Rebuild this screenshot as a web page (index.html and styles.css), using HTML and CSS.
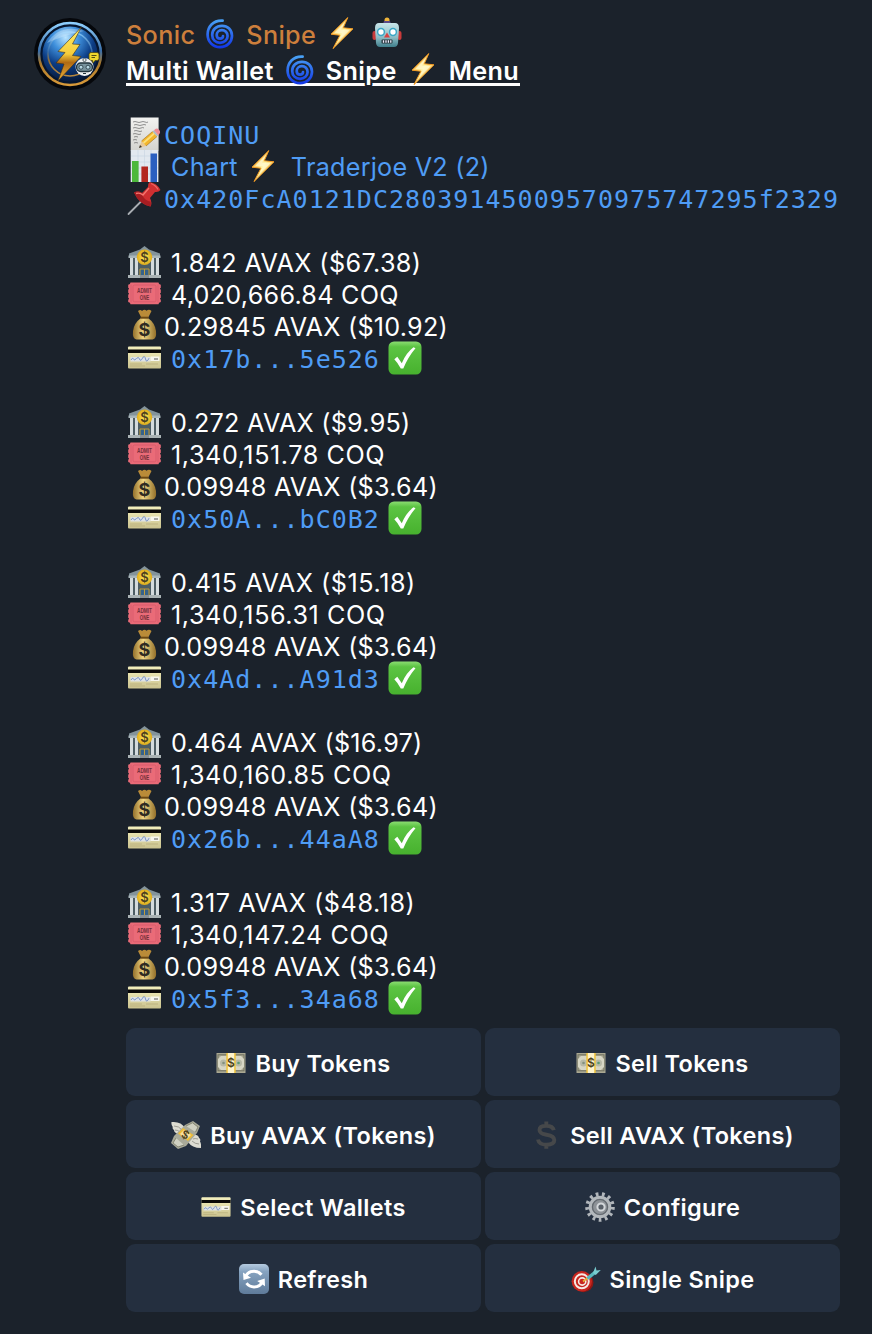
FILE: index.html
```html
<!DOCTYPE html>
<html lang="en">
<head>
<meta charset="utf-8">
<title>Sonic Snipe</title>
<link rel="stylesheet" href="styles.css">
</head>
<body>
<svg class="defs" aria-hidden="true">
  <defs>
    <linearGradient id="gSwirl" x1="0" y1="0" x2="0" y2="1"><stop offset="0" stop-color="#48a0f4"/><stop offset="1" stop-color="#1238e8"/></linearGradient>
    <linearGradient id="gBolt" x1="0" y1="0" x2="1" y2="1"><stop offset="0" stop-color="#f59a1c"/><stop offset=".5" stop-color="#fff3a0"/><stop offset="1" stop-color="#f08a14"/></linearGradient>
    <linearGradient id="gBot" x1="0" y1="0" x2="0" y2="1"><stop offset="0" stop-color="#c8e6ea"/><stop offset=".6" stop-color="#8dbcc4"/><stop offset="1" stop-color="#3f7f8c"/></linearGradient>
    <linearGradient id="gPaper" x1="0" y1="0" x2="0" y2="1"><stop offset="0" stop-color="#f2f2f0"/><stop offset="1" stop-color="#d4d4d0"/></linearGradient>
    <linearGradient id="gCard" x1="0" y1="0" x2="0" y2="1"><stop offset="0" stop-color="#f3efbd"/><stop offset="1" stop-color="#cbc38f"/></linearGradient>
    <linearGradient id="gCheck" x1="0" y1="0" x2="0" y2="1"><stop offset="0" stop-color="#8bdc72"/><stop offset=".16" stop-color="#5cc443"/><stop offset="1" stop-color="#47b12e"/></linearGradient>
    <linearGradient id="gBag" x1="0" y1="0" x2="1" y2="0"><stop offset="0" stop-color="#94702a"/><stop offset=".45" stop-color="#f0d684"/><stop offset="1" stop-color="#94702a"/></linearGradient>
    <linearGradient id="gRef" x1="0" y1="0" x2="0" y2="1"><stop offset="0" stop-color="#b5cbe0"/><stop offset=".25" stop-color="#86a3c0"/><stop offset="1" stop-color="#5f7b9a"/></linearGradient>
    <radialGradient id="gCoin"><stop offset="0" stop-color="#ffe95a"/><stop offset="1" stop-color="#e0ac1c"/></radialGradient>
    <radialGradient id="gOrb" cx=".42" cy=".2" r=".85"><stop offset="0" stop-color="#b9e4ff"/><stop offset=".28" stop-color="#3f90dc"/><stop offset=".6" stop-color="#0c3c84"/><stop offset="1" stop-color="#061430"/></radialGradient>
    <linearGradient id="gRing" x1="0" y1="0" x2="0" y2="1"><stop offset="0" stop-color="#8ed0ff"/><stop offset=".45" stop-color="#3a6ea8"/><stop offset=".65" stop-color="#a9782a"/><stop offset="1" stop-color="#d99a3a"/></linearGradient>
    <linearGradient id="gGold" x1="0" y1="0" x2="0" y2="1"><stop offset="0" stop-color="#fff06a"/><stop offset=".5" stop-color="#f5cc3c"/><stop offset=".66" stop-color="#b06a14"/><stop offset="1" stop-color="#f0b43a"/></linearGradient>
  </defs>
</svg>
<svg class="symbols" aria-hidden="true">
  <symbol id="swirl" viewBox="0 0 28 30">
    <path d="M16.600 1.600C7 1 1.600 8 1.600 15.500C1.600 23 7 28.200 14 28.200C21 28.200 26 23 26 16.800C26 10.800 21.600 6.800 16 6.800C10 6.800 6.200 11 6.200 16C6.200 20.600 9.600 23.800 14 23.800C18.400 23.800 21.600 20.800 21.600 17C21.600 13.600 19 11.200 15.900 11.200C12.800 11.200 10.700 13.400 10.700 16C10.700 18.200 12.200 19.600 14 19.600C15.800 19.600 17 18.500 17 17" fill="none" stroke="url(#gSwirl)" stroke-width="2.700" stroke-linecap="round"/>
  </symbol>
  <symbol id="bolt" viewBox="0 0 24 32">
    <path d="M17.800.6 1 17.200 10 18.200 3 31.600 23 11.800 13.200 10.800Z" fill="url(#gBolt)" stroke="#f29a22" stroke-width="1"/>
    <path d="M15 5 4.500 15.800 12 16.600 8 24 19.500 13.200 11.200 12.500Z" fill="#fffbd8" opacity=".7"/>
  </symbol>
  <symbol id="robot" viewBox="0 0 30 31">
    <path d="M12.500 6V3a2.500 2.500 0 0 1 5 0v3z" fill="#f0b53a"/><path d="M12 4h6l1 3h-8z" fill="#5b4a86"/>
    <rect x=".5" y="14" width="4" height="9" rx="2" fill="#c93a3a"/><rect x="25.500" y="14" width="4" height="9" rx="2" fill="#c93a3a"/>
    <path d="M7 6h16q4 0 4 5l-1 15q-.5 4-4 4H8q-3.500 0-4-4L3 11q0-5 4-5z" fill="url(#gBot)"/>
    <circle cx="9" cy="15" r="3.400" fill="#fff" stroke="#3aa7c6" stroke-width="1.500"/><circle cx="21" cy="15" r="3.400" fill="#fff" stroke="#3aa7c6" stroke-width="1.500"/>
    <path d="M15 15.500 18 20.500H12Z" fill="#d84343"/>
    <rect x="9.500" y="22.500" width="11" height="4" rx="1" fill="#26363c"/><path d="M11.500 23.300v2.400M14 23.300v2.400M16.400 23.300v2.400M18.800 23.300v2.400" stroke="#eef" stroke-width="1.300"/>
  </symbol>
  <symbol id="memo" viewBox="0 0 36 36">
    <path d="M4.700.5H32.600V33.500H4.700Z" fill="url(#gPaper)"/>
    <path d="M7 5q2-1 4 0t4 0t4 0t3 0M8 8q2-1 4 0t4 0t4 0M7 11q2-1 4 0t4 0t3 0M8 14q2-1 4 0t4 0M7 17q2-1 4 0t4 0M8 20q2-1 4 0M7 23q2-1 4 0M8 26q2-1 4 0" fill="none" stroke="#777" stroke-width=".8"/>
    <path d="M13 31 15.500 24 20 29Z" fill="#e8c898"/><path d="M13 31l1-3 2 2z" fill="#333"/>
    <path d="M15.500 24 26.500 14.500 31 19.500 20 29Z" fill="#f3b52c"/><path d="M15.500 24 26.500 14.500M20 29 31 19.500" stroke="#9a6d1c" stroke-width=".6"/><path d="M17.500 26 28.200 16.500" stroke="#fbe07a" stroke-width="1.700"/><path d="M26.500 14.500 28 13.200 32.300 18.200 31 19.500Z" fill="#aebac0"/><path d="M28 13.200q2.500-3 5-.4t-.7 5.400z" fill="#ef8a92"/>
  </symbol>
  <symbol id="chart" viewBox="0 0 36 36">
    <path d="M4.700 1H32.400V33H4.700Z" fill="#e2e8ef"/><path d="M5 7h27M5 13h27M5 19h27M5 25h27M12 1v32M18.500 1v32M25 1v32" stroke="#c8d4e0" stroke-width=".6"/>
    <path d="M6 12h6.600v21H6z" fill="#4cb83c"/><path d="M15.400 17.500H22V33h-6.600z" fill="#b3261e"/><path d="M24.500 4.500H31V33h-6.500z" fill="#2a5fc0"/>
  </symbol>
  <symbol id="pin" viewBox="0 0 36 36">
    <path d="M2.500 33 16 19.500" stroke="#a8adb2" stroke-width="1.800" stroke-linecap="round"/>
    <path d="M8 11.500q4-2 8 .5l6-6q-.5-3 1.500-5Q31 2 34.500 9q-2 2.500-5.500 2l-5 6q2.500 5 .5 8.500Q13 23 8 11.500Z" fill="#cf2f31"/>
    <path d="M8 11.500q4-2 8 .5c0 4 4 8 8.500 8.500q.8 2.500 0 5Q13 23 8 11.500Z" fill="#a51d22"/><path d="M10 12.500q4-1 7 1.500l6-7" fill="none" stroke="#f57670" stroke-width="1.300"/><path d="M25 2.500q5 2 7 6" fill="none" stroke="#ee6a65" stroke-width="1.200"/>
  </symbol>
  <symbol id="bank" viewBox="0 0 36 36">
    <path d="M3 8.500 14 4.500 18.500 1 23 4.500 34 8.500V12H3Z" fill="#83939a"/><path d="M4 12H33V30H4Z" fill="#4d5d64"/>
    <path d="M2.500 10.500h32v2.500h-32z" fill="#a8b5ba"/>
    <path d="M5.500 13v17M10.500 13v17M26.500 13v17M31.500 13v17" stroke="#d3dadd" stroke-width="3"/>
    <path d="M14 24h9v7h-9z" fill="#35628a"/><path d="M14 31v-7h9v7M18.500 24v7" fill="none" stroke="#c49b35" stroke-width="1"/>
    <path d="M2 30h33v3H2z" fill="#a9b2b4"/><path d="M14 30h9v3h-9z" fill="#879094"/>
    <circle cx="18.500" cy="12.300" r="7.700" fill="url(#gCoin)"/><text x="18.500" y="17" class="g-dollar" font-size="13">$</text>
  </symbol>
  <symbol id="ticket" viewBox="0 -1.500 36 36">
    <path d="M4.500 4h28q0 2 2.300 2.200v3l-1 1 1 1v3l-1 1 1 1v3l-1 1 1 1v2.300Q32.500 23.700 32.500 25.800h-28Q4.500 23.700 2.200 23.500v-2.300l1-1-1-1v-3l1-1-1-1v-3l1-1-1-1v-3Q4.500 6 4.500 4Z" fill="#ea6b78"/>
    <rect x="7" y="6.500" width="23" height="16.800" rx="1.500" fill="none" stroke="#d25868" stroke-width=".7"/><path d="M5 6v18M32 6v18" stroke="#d45b69" stroke-width=".8"/>
    <text x="18.500" y="14.500" class="g-ticket" textLength="15" lengthAdjust="spacingAndGlyphs">ADMIT</text><text x="18.500" y="21.500" class="g-ticket" textLength="9.500" lengthAdjust="spacingAndGlyphs">ONE</text>
  </symbol>
  <symbol id="bag" viewBox="0 0 36 36">
    <path d="M12 2q2.500-2 4 0 2.500-2.200 4.500-.2 2.500-2 5 .2l-3.500 7h-6.500Z" fill="#b98b38"/>
    <path d="M15 9h7q7 5 8 13 .8 8-3.500 8.500h-16Q6.200 30 7 22 8 14 15 9Z" fill="url(#gBag)"/>
    <path d="M14.500 8.700h8" stroke="#6d4a14" stroke-width="2"/><text x="18.500" y="26.700" class="g-dollar bold" font-size="18">$</text>
  </symbol>
  <symbol id="card" viewBox="0 -1 36 36">
    <rect x="2" y="4.500" width="33" height="22" rx="1" fill="url(#gCard)"/><path d="M2 7.500h33v3.500H2z" fill="#090909"/><path d="M4.500 15h20v4.500h-20z" fill="#dfe3e6"/><path d="M24.500 14.500h9V19h-9z" fill="#f6f6ef"/>
    <path d="M5 18q1.500-3 2.500-1t3-.5 3 .5 3-.8 3 .8 3.500-.8" fill="none" stroke="#6d89c0" stroke-width=".9"/><path d="M28 17h4" stroke="#555" stroke-width="1"/><path d="M4 22h12M4 24h15M20 22h12" stroke="#b4ab76" stroke-width=".7"/>
  </symbol>
  <symbol id="check" viewBox="0 0 34 34">
    <rect x=".5" y=".5" width="33" height="33" rx="5.500" fill="url(#gCheck)"/><path d="M6.300 18.200 9.300 15.800 13.800 22.200Q18 12 25.500 6.300L27.500 7.200Q20 16 15.300 27.500H12.800Q10 22 6.300 18.200Z" fill="#fff"/>
  </symbol>
  <symbol id="cash" viewBox="0 0 30 30">
    <rect x=".5" y="5" width="29" height="20" fill="#aaa892"/><rect x="2" y="6.800" width="26" height="16" fill="none" stroke="#6f705f" stroke-width="1"/><path d="M5 8h20l3 3v8l-3 3H5l-3-3v-8z" fill="#d7d6c4"/><circle cx="7.500" cy="15" r="3.500" fill="#b7b9a7"/><circle cx="22.500" cy="15" r="3.500" fill="#b7b9a7"/><circle cx="7.500" cy="15" r="1.300" fill="#84917f"/><circle cx="22.500" cy="15" r="1.300" fill="#5c9a72"/>
    <path d="M10.300 5h9.400v20h-9.400z" fill="#efc33a"/><path d="M11.800 5h6.400v20h-6.400z" fill="#fdf3cc"/><text x="15" y="19.200" class="g-dollar" font-size="12">$</text>
  </symbol>
  <symbol id="fly" viewBox="0 0 30 30">
    <path d="M.5 2Q10 1 14 8L8 14Q3 13 3 10 1 9 1.800 7 0 5 .5 2ZM30 28Q21 28 17 22l5-8q6 1 6 4 2 1 1 3.500 1.500 2.500 1 6.500Z" fill="#dddcd2"/><path d="M3 6q5 0 8 4M4 10q3 0 5 2M28 24q-4 0-7-3M27 19q-3-1-5 0" fill="none" stroke="#96968c" stroke-width=".9"/>
    <path d="M14 5 22 1 29 6 26 13 15 26 7 29 0 23 3 16Z" fill="#a9aa99"/><path d="M15 6 21.500 2.800 27 7l-2.500 5M5 18l-3 5 5 4 6-2" fill="#cfd0c1" stroke="#777966" stroke-width=".8"/>
    <path d="M7 13.500 12 8 22.500 15 17 21Z" fill="#eebd38"/><path d="M9 14 13 10 20 15 16 19Z" fill="#f7e0a0"/><text x="14.500" y="18.600" class="g-dollar" font-size="11" transform="rotate(25 14.500 14.500)">$</text>
  </symbol>
  <symbol id="dollar" viewBox="0 0 30 30"><path d="M22.800 10.200Q21.800 5.700 15.300 5.700 8.500 5.700 8.500 10 8.500 13.600 15.500 14.700 23.300 15.900 23.300 20 23.300 24.700 15.500 24.700 8 24.700 7 19.500M15.300 1.500V5.500M15.300 25V28.800" fill="none" stroke="#46484a" stroke-width="3.900"/></symbol>
  <symbol id="bcard" viewBox="1.500 0 34 33"><use href="#card" width="36" height="36"/></symbol>
  <symbol id="gear" viewBox="0 0 30 30">
    <circle cx="15" cy="15" r="12.800" fill="none" stroke="#b1b6bb" stroke-width="4" stroke-dasharray="2.700 3.487"/><circle cx="15" cy="15" r="9.800" fill="#7f858b" stroke="#b3b8bc" stroke-width="3"/><circle cx="15" cy="15" r="7.500" fill="#8d9297" stroke="#62686e" stroke-width="1.200"/><circle cx="16" cy="15" r="3.600" fill="#596068" stroke="#d3d7da" stroke-width="2"/>
  </symbol>
  <symbol id="refresh" viewBox="0 0 30 30">
    <rect width="30" height="30" rx="5" fill="url(#gRef)"/><path d="M6.500 13Q8.500 7.200 15 7.200q4.500 0 7.500 3.600M23.500 17Q21.500 23 15 23q-4.500 0-7.500-3.800" fill="none" stroke="#fff" stroke-width="2.900"/><path d="M4 8.500 4.500 16 12 13.800ZM26 22.300 25.700 14.500 18.200 17Z" fill="#fff"/>
  </symbol>
  <symbol id="target" viewBox="0 0 30 30">
    <ellipse cx="12.500" cy="18.500" rx="10" ry="9.700" fill="#8f1814"/><circle cx="10.800" cy="17.300" r="10.200" fill="#c7261f"/><circle cx="10.800" cy="17.300" r="7" fill="none" stroke="#f5e9e4" stroke-width="2"/><circle cx="11.200" cy="17.500" r="3.600" fill="#c7261f" stroke="#f5e9e4" stroke-width="1.600"/>
    <path d="M12 17.500 18 13" stroke="#e5b334" stroke-width="1.600"/><path d="M16.500 14.500 25 7.500" stroke="#58b8bd" stroke-width="3.400"/><path d="M22 9 24.500 2.500 25.500 6.500 29.800 6 24.800 11Z" fill="#79cdd0"/>
  </symbol>
  <symbol id="avatar" viewBox="0 0 72 72">
    <circle cx="36" cy="36" r="36" fill="#05070b"/><circle cx="36" cy="36" r="31" fill="#06162f" stroke="url(#gRing)" stroke-width="2.600"/><circle cx="36" cy="36" r="27.500" fill="url(#gOrb)"/><circle cx="36" cy="36" r="22" fill="none" stroke="url(#gRing)" stroke-width="1.600" opacity=".85"/>
    <path d="M13 25Q26 5 50 13 28 18 13 25Z" fill="#d8efff" opacity=".35"/>
    <path d="M47.500 9 24 33.500 31 34.500 22 45 30 46 24 63 47 38.500 38.500 37.500 46 26.500 38.500 26Z" fill="url(#gGold)" stroke="#3b2a14" stroke-width=".6"/>
    <path d="M55 36.500q0-2 2-2h6q2 0 2 2v4q0 2-2 2h-2l-2.500 3v-3h-1.500q-2 0-2-2z" fill="#f0d92c" stroke="#4f4715" stroke-width=".8"/><path d="M57.500 37.500h5M57.500 39.500h3.500" stroke="#574f12" stroke-width="1"/>
    <circle cx="50.500" cy="49" r="9" fill="#eef1f2"/><circle cx="50.500" cy="42" r="1.600" fill="#eef1f2" stroke="#344148" stroke-width=".8"/><rect x="42.500" y="45" width="16" height="8.500" rx="4.200" fill="#78939d" stroke="#22343d" stroke-width="1.300"/><circle cx="47" cy="49.200" r="2" fill="#b7d8e3" stroke="#22343d" stroke-width=".8"/><circle cx="54" cy="49.200" r="2" fill="#b7d8e3" stroke="#22343d" stroke-width=".8"/><path d="M49 55.500h3" stroke="#22343d" stroke-width="1"/>
  </symbol>
</svg>

<main class="message">
  <svg class="avatar"><use href="#avatar"/></svg>
  <div class="body">
    <div class="sender"><span>Sonic</span><svg class="swirl"><use href="#swirl"/></svg><span>Snipe</span><svg class="bolt"><use href="#bolt"/></svg><svg class="robot"><use href="#robot"/></svg></div>
    <h1 class="heading"><span>Multi Wallet</span><svg class="swirl"><use href="#swirl"/></svg><span>Sni<span class="skip">p</span>e</span><svg class="bolt"><use href="#bolt"/></svg><span>Menu</span></h1>

    <section class="group">
      <div class="line link mono"><svg class="icon"><use href="#memo"/></svg><span class="tight">COQINU</span></div>
      <div class="line link"><svg class="icon"><use href="#chart"/></svg><span class="spaced">Chart</span><svg class="bolt"><use href="#bolt"/></svg><span>Traderjoe V2 (2)</span></div>
      <div class="line link mono"><svg class="icon"><use href="#pin"/></svg><span class="tight">0x420FcA0121DC28039145009570975747295f2329</span></div>
    </section>

    <section class="group">
      <div class="line"><svg class="icon"><use href="#bank"/></svg><span class="spaced mid">1.842 AVAX ($67.38)</span></div>
      <div class="line"><svg class="icon"><use href="#ticket"/></svg><span class="spaced">4,020,666.84 COQ</span></div>
      <div class="line"><svg class="icon"><use href="#bag"/></svg><span class="tight">0.29845 AVAX ($10.92)</span></div>
      <div class="line link mono"><svg class="icon"><use href="#card"/></svg><span class="spaced">0x17b...5e526</span><svg class="check"><use href="#check"/></svg></div>
    </section>
    <section class="group">
      <div class="line"><svg class="icon"><use href="#bank"/></svg><span class="spaced">0.272 AVAX ($9.95)</span></div>
      <div class="line"><svg class="icon"><use href="#ticket"/></svg><span class="spaced wide">1,340,151.78 COQ</span></div>
      <div class="line"><svg class="icon"><use href="#bag"/></svg><span class="tight">0.09948 AVAX ($3.64)</span></div>
      <div class="line link mono"><svg class="icon"><use href="#card"/></svg><span class="spaced">0x50A...bC0B2</span><svg class="check"><use href="#check"/></svg></div>
    </section>
    <section class="group">
      <div class="line"><svg class="icon"><use href="#bank"/></svg><span class="spaced wide">0.415 AVAX ($15.18)</span></div>
      <div class="line"><svg class="icon"><use href="#ticket"/></svg><span class="spaced wide">1,340,156.31 COQ</span></div>
      <div class="line"><svg class="icon"><use href="#bag"/></svg><span class="tight">0.09948 AVAX ($3.64)</span></div>
      <div class="line link mono"><svg class="icon"><use href="#card"/></svg><span class="spaced">0x4Ad...A91d3</span><svg class="check"><use href="#check"/></svg></div>
    </section>
    <section class="group">
      <div class="line"><svg class="icon"><use href="#bank"/></svg><span class="spaced">0.464 AVAX ($16.97)</span></div>
      <div class="line"><svg class="icon"><use href="#ticket"/></svg><span class="spaced wide">1,340,160.85 COQ</span></div>
      <div class="line"><svg class="icon"><use href="#bag"/></svg><span class="tight">0.09948 AVAX ($3.64)</span></div>
      <div class="line link mono"><svg class="icon"><use href="#card"/></svg><span class="spaced">0x26b...44aA8</span><svg class="check"><use href="#check"/></svg></div>
    </section>
    <section class="group">
      <div class="line"><svg class="icon"><use href="#bank"/></svg><span class="spaced wide">1.317 AVAX ($48.18)</span></div>
      <div class="line"><svg class="icon"><use href="#ticket"/></svg><span class="spaced wide">1,340,147.24 COQ</span></div>
      <div class="line"><svg class="icon"><use href="#bag"/></svg><span class="tight">0.09948 AVAX ($3.64)</span></div>
      <div class="line link mono"><svg class="icon"><use href="#card"/></svg><span class="spaced">0x5f3...34a68</span><svg class="check"><use href="#check"/></svg></div>
    </section>

    <div class="keyboard">
      <button class="key"><svg><use href="#cash"/></svg><span>Buy Tokens</span></button>
      <button class="key"><svg><use href="#cash"/></svg><span>Sell Tokens</span></button>
      <button class="key"><svg><use href="#fly"/></svg><span>Buy AVAX (Tokens)</span></button>
      <button class="key"><svg><use href="#dollar"/></svg><span>Sell AVAX (Tokens)</span></button>
      <button class="key"><svg><use href="#bcard"/></svg><span>Select Wallets</span></button>
      <button class="key"><svg><use href="#gear"/></svg><span>Configure</span></button>
      <button class="key"><svg><use href="#refresh"/></svg><span>Refresh</span></button>
      <button class="key"><svg><use href="#target"/></svg><span>Single Snipe</span></button>
    </div>
  </div>
</main>
</body>
</html>
```
FILE: styles.css
```css
* { box-sizing: border-box; }
body { margin: 0; background: #1b222b; color: #fff; font-family: Inter, "Liberation Sans", sans-serif; font-size: 25.2px; }
.defs { position: absolute; width: 0; height: 0; }
svg { flex: none; display: block; }
.symbols { display: none; }

.message { display: flex; gap: 20px; padding: 17px 32px 22px 34px; height: 1334px; }
.avatar { width: 72px; height: 72px; margin-top: 1px; }
.body { flex: none; width: 714px; }

.swirl { width: 28px; height: 30px; }
.bolt { width: 24px; height: 32px; }
.robot { width: 30px; height: 31px; }

.sender { display: flex; align-items: center; height: 36px; color: #cd7f3c; font-weight: 500; letter-spacing: .35px; }
.sender .swirl { margin: 0 12px 3px 11px; }
.sender .bolt { margin: 0 18px 4px 14px; }
.sender .robot { margin-bottom: 6px; }

.heading { display: flex; align-items: center; width: 394px; height: 34px; margin: 0; padding-top: 2px; font-size: 25.2px; font-weight: 600; letter-spacing: .38px; background: linear-gradient(#fff, #fff) 0 30px / 100% 3px no-repeat; }
.heading .swirl { margin: 0 12px 3px 12px; }
.heading .bolt { margin: 0 14px 4px 14px; }
.skip { text-shadow: 2px 0 #1b222b, -2px 0 #1b222b, 0 2px #1b222b, 2px 2px #1b222b, -2px 2px #1b222b; }

.group { margin-top: 32px; }
.line { display: flex; align-items: center; height: 32px; line-height: 32px; white-space: nowrap; letter-spacing: .25px; }
.icon { width: 36px; height: 36px; }
.tight { margin-left: 2px; }
.spaced { margin-left: 9px; }
.mid { letter-spacing: .38px; }
.wide { letter-spacing: .56px; }
.link { color: #4f9cf5; }
.line .bolt { margin: 0 16px 3px 13px; }
.mono { font-family: "DejaVu Sans Mono", monospace; font-size: 25px; letter-spacing: 1.02px; }
.mono span { padding-top: 2px; }
.check { width: 34px; height: 34px; margin: 0 0 3px 8px; }

.keyboard { display: grid; grid-template-columns: 355px 355px; grid-auto-rows: 68px; gap: 4px; margin-top: 13px; }
.key { display: flex; align-items: center; justify-content: center; gap: 9px; padding: 2px 0 0; border: 0; border-radius: 9px; background: #242f3f; color: #fff; font: 600 23.5px Inter, "Liberation Sans", sans-serif; letter-spacing: .34px; }
.key svg { width: 30px; height: 30px; margin-bottom: 1px; }

.g-dollar { font-family: Inter, sans-serif; font-weight: 600; text-anchor: middle; fill: #4b4020; letter-spacing: 0; }
.bold { font-weight: 700; fill: #2f2a22; }
.g-ticket { font-family: "Liberation Sans", sans-serif; font-weight: 700; font-size: 8px; text-anchor: middle; fill: #74303a; letter-spacing: 0; }
```
